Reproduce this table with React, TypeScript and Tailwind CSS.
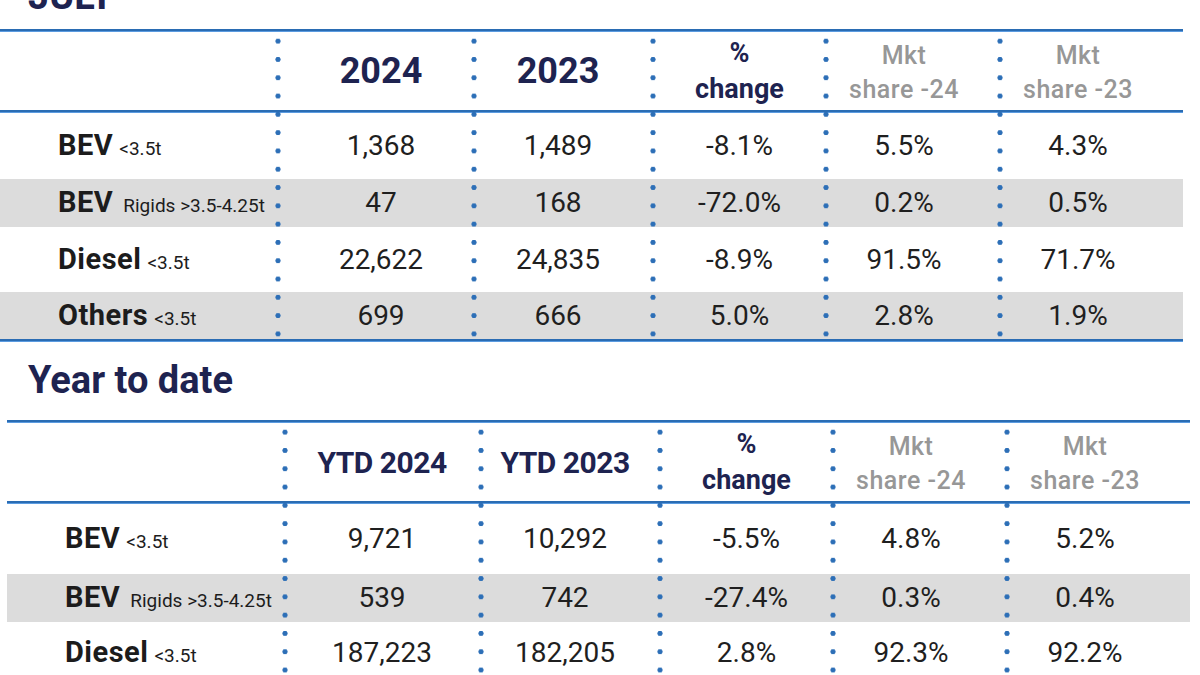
import React from 'react';

type Row = { name: string; note: string; values: string[]; grey?: boolean };

const colStarts = ['col-start-1', 'col-start-3', 'col-start-5', 'col-start-7', 'col-start-9', 'col-start-11'];
const sepStarts = ['col-start-2', 'col-start-4', 'col-start-6', 'col-start-8', 'col-start-10'];
const rowStarts = ['row-start-4', 'row-start-5', 'row-start-6', 'row-start-7'];
const cellPad = [
  'pl-[58px] justify-start',
  'pl-[10px] justify-center',
  'pr-[11px] justify-center',
  'justify-center',
  'pr-[18px] justify-center',
  'pr-[30px] justify-center',
];
// the YTD table sits 7px further right, its first column a little further left
const ytdPad = [
  'pl-[58px] justify-start',
  'pr-[2px] justify-center',
  'pr-[11px] justify-center',
  'justify-center',
  'pr-[18px] justify-center',
  'pr-[30px] justify-center',
];

const julyRows: Row[] = [
  { name: 'BEV', note: '<3.5t', values: ['1,368', '1,489', '-8.1%', '5.5%', '4.3%'] },
  { name: 'BEV', note: 'Rigids >3.5-4.25t', values: ['47', '168', '-72.0%', '0.2%', '0.5%'], grey: true },
  { name: 'Diesel', note: '<3.5t', values: ['22,622', '24,835', '-8.9%', '91.5%', '71.7%'] },
  { name: 'Others', note: '<3.5t', values: ['699', '666', '5.0%', '2.8%', '1.9%'], grey: true },
];

const ytdRows: Row[] = [
  { name: 'BEV', note: '<3.5t', values: ['9,721', '10,292', '-5.5%', '4.8%', '5.2%'] },
  { name: 'BEV', note: 'Rigids >3.5-4.25t', values: ['539', '742', '-27.4%', '0.3%', '0.4%'], grey: true },
  { name: 'Diesel', note: '<3.5t', values: ['187,223', '182,205', '2.8%', '92.3%', '92.2%'] },
];

function Dots({ col }: { col: string }) {
  return (
    <div
      className={`${col} row-[2/-1] z-10 bg-[image:radial-gradient(circle,#2d6fb7_2.3px,transparent_2.9px)] bg-[length:6px_18.3px] bg-repeat-y`}
    />
  );
}

function Line({ row }: { row: string }) {
  return <div className={`${row} col-[1/-1] bg-[#2a6cb3] border-b border-[#5b9be0]`} />;
}

function Header({ ytd }: { ytd: boolean }) {
  const year = ytd
    ? 'text-[30px] font-bold text-[#1e2350] tracking-[-0.5px]'
    : 'text-[36px] font-bold text-[#1e2350]';
  const pads = ytd ? ytdPad : cellPad;
  return (
    <>
      <div className={`row-start-2 col-start-3 flex items-center ${pads[1]} ${year}`}>
        {ytd ? 'YTD 2024' : '2024'}
      </div>
      <div className={`row-start-2 col-start-5 flex items-center ${pads[2]} ${year}`}>
        {ytd ? 'YTD 2023' : '2023'}
      </div>
      <div className="row-start-2 col-start-7 flex flex-col items-center justify-center text-[27px] font-bold leading-[36px] text-[#1e2350]">
        <span>%</span>
        <span>change</span>
      </div>
      <div className="row-start-2 col-start-9 flex flex-col items-center justify-center pr-[18px] pt-[4px] text-[25px] font-medium leading-[34px] tracking-[0.5px] text-[#979797]">
        <span>Mkt</span>
        <span>share -24</span>
      </div>
      <div className="row-start-2 col-start-11 flex flex-col items-center justify-center pr-[30px] pt-[4px] text-[25px] font-medium leading-[34px] tracking-[0.5px] text-[#979797]">
        <span>Mkt</span>
        <span>share -23</span>
      </div>
    </>
  );
}

function DataTable({ rows, ytd }: { rows: Row[]; ytd: boolean }) {
  const rowsClass = ytd
    ? 'grid-rows-[3px_78px_3px_70px_48px_62px]'
    : 'grid-rows-[3px_78px_3px_66px_48px_65px_47px_3px]';
  const pads = ytd ? ytdPad : cellPad;
  return (
    <div
      className={`grid w-[1183px] grid-cols-[275px_6px_190px_6px_173px_6px_167px_6px_168px_6px_180px] ${rowsClass}`}
    >
      <Line row="row-start-1" />
      <Line row="row-start-3" />
      {!ytd && <Line row="row-start-8" />}
      {rows.map((r, i) =>
        r.grey ? <div key={`g${i}`} className={`${rowStarts[i]} col-[1/-1] bg-[#dcdcdc]`} /> : null,
      )}
      <Header ytd={ytd} />
      {rows.map((r, i) => (
        <React.Fragment key={i}>
          <div className={`${rowStarts[i]} ${colStarts[0]} flex items-center ${pads[0]}`}>
            <span className="flex items-baseline text-[#1c1c1c]">
              <span className="text-[29px] font-bold tracking-[0.5px]">{r.name}</span>
              <span className={`${r.note.startsWith('R') ? 'ml-[10px]' : 'ml-[6px]'} text-[19px]`}>
                {r.note}
              </span>
            </span>
          </div>
          {r.values.map((v, j) => (
            <div
              key={j}
              className={`${rowStarts[i]} ${colStarts[j + 1]} flex items-center ${pads[j + 1]} text-[28px] text-[#1f1f1f]`}
            >
              {v}
            </div>
          ))}
        </React.Fragment>
      ))}
      {sepStarts.map((c) => (
        <Dots key={c} col={c} />
      ))}
    </div>
  );
}

export default function App() {
  return (
    <div className="h-[675px] w-[1200px] overflow-hidden bg-white font-['Roboto',sans-serif]">
      {/* July */}
      <div className="-mt-[23px] h-[52px] pl-[28px] text-[38px] font-bold leading-[38px] text-[#1e2350]">
        JULY
      </div>
      <DataTable rows={julyRows} ytd={false} />

      {/* Year to date */}
      <div className="mt-[16px] h-[62px] pl-[28px] text-[38px] font-bold leading-[44px] text-[#1e2350]">
        Year to date
      </div>
      <div className="ml-[7px]">
        <DataTable rows={ytdRows} ytd={true} />
      </div>
    </div>
  );
}
